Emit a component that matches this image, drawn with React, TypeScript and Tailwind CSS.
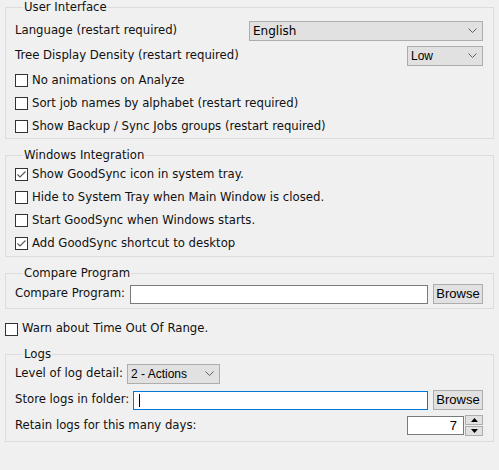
import React from "react";

const font = { fontFamily: '"DejaVu Sans", "Liberation Sans", sans-serif' };
const ctrlFont = { fontFamily: '"Liberation Sans", Arial, sans-serif' };

function Chevron() {
  return (
    <svg width="9" height="6" viewBox="0 0 9 6" className="shrink-0">
      <path d="M0.5 0.5 L4.5 4.5 L8.5 0.5" fill="none" stroke="#606060" strokeWidth="1" />
    </svg>
  );
}

function Select({ value, className, style }: { value: string; className: string; style?: React.CSSProperties }) {
  return (
    <div
      className={`flex items-center justify-between h-[20px] bg-[#e1e1e1] border border-[#adadad] pl-[3px] pr-[5px] text-[12px] text-black ${className}`}
      style={style}
    >
      <span>{value}</span>
      <Chevron />
    </div>
  );
}

function Check({ label, checked = false }: { label: string; checked?: boolean }) {
  return (
    <div className="flex items-center h-[23px] gap-[4px]">
      <div className="w-[13px] h-[13px] border border-[#333] bg-white flex items-center justify-center shrink-0">
        {checked && (
          <svg width="11" height="11" viewBox="0 0 11 11">
            <path d="M1.5 5.5 L4 8 L9.5 2.5" fill="none" stroke="#555" strokeWidth="1.1" />
          </svg>
        )}
      </div>
      <span>{label}</span>
    </div>
  );
}

function Group({ title, children, className = "" }: { title: string; children: React.ReactNode; className?: string }) {
  return (
    <fieldset className={`border border-[#dcdcdc] pl-[9px] pr-[10px] ${className}`}>
      <legend className="ml-[8px] px-[1px] leading-[14px] h-[14px]">{title}</legend>
      {children}
    </fieldset>
  );
}

function Browse() {
  return (
    <div
      className="w-[50px] h-[20px] bg-[#e1e1e1] border border-[#adadad] flex items-center justify-center text-[13px] text-black shrink-0"
      style={ctrlFont}
    >
      Browse
    </div>
  );
}

export default function App() {
  return (
    <div className="w-[499px] h-[470px] bg-[#f0f0f0] text-[11.7px] text-[#111] px-[5px] overflow-hidden" style={font}>
      <Group title="User Interface">
        <div className="pt-[7px]">
          <div className="flex items-center justify-between h-[20px]">
            <span>Language (restart required)</span>
            <Select value="English" className="w-[234px]" style={font} />
          </div>
          <div className="flex items-center justify-between h-[20px] mt-[5px] mb-[3px]">
            <span>Tree Display Density (restart required)</span>
            <Select value="Low" className="w-[76px]" style={ctrlFont} />
          </div>
          <Check label="No animations on Analyze" />
          <Check label="Sort job names by alphabet (restart required)" />
          <Check label="Show Backup / Sync Jobs groups (restart required)" />
        </div>
      </Group>

      <Group title="Windows Integration" className="mt-[9px]">
        <div className="pt-[1px] pb-[1px]">
          <Check label="Show GoodSync icon in system tray." checked />
          <Check label="Hide to System Tray when Main Window is closed." />
          <Check label="Start GoodSync when Windows starts." />
          <Check label="Add GoodSync shortcut to desktop" checked />
        </div>
      </Group>

      <Group title="Compare Program" className="mt-[9px]">
        <div className="flex items-center h-[20px] mt-[4px] mb-[4px]">
          <span className="w-[115px]">Compare Program:</span>
          <div className="w-[298px] h-[19px] bg-white border border-[#7a7a7a]" />
          <div className="ml-auto">
            <Browse />
          </div>
        </div>
      </Group>

      <div className="flex items-center h-[20px] mt-[10px] gap-[4px]">
        <div className="w-[13px] h-[13px] border border-[#333] bg-white shrink-0" />
        <span>Warn about Time Out Of Range.</span>
      </div>

      <Group title="Logs" className="mt-[8px]">
        <div className="pt-[3px] pb-[5px]">
          <div className="flex items-center h-[20px]">
            <span className="w-[112px]">Level of log detail:</span>
            <Select value="2 - Actions" className="w-[93px]" style={ctrlFont} />
          </div>
          <div className="flex items-center h-[20px] mt-[6px]">
            <span className="w-[118px]">Store logs in folder:</span>
            <div className="w-[295px] h-[19px] bg-white border border-[#0078d7] flex items-center pl-[5px]">
              <span className="w-[1px] h-[13px] bg-black" />
            </div>
            <div className="ml-auto">
              <Browse />
            </div>
          </div>
          <div className="flex items-center justify-between h-[21px] mt-[5px]">
            <span>Retain logs for this many days:</span>
            <div className="flex items-center gap-[1px]">
              <div
                className="w-[57px] h-[19px] bg-white border border-[#7a7a7a] flex items-center justify-end pr-[6px] text-[13px] text-black"
                style={ctrlFont}
              >
                7
              </div>
              <div className="flex flex-col gap-[1px]">
                <div className="w-[18px] h-[10px] bg-[#e1e1e1] border border-[#adadad] flex items-center justify-center">
                  <svg width="7" height="4" viewBox="0 0 7 4">
                    <path d="M3.5 0 L7 4 L0 4 Z" fill="#000" />
                  </svg>
                </div>
                <div className="w-[18px] h-[10px] bg-[#e1e1e1] border border-[#adadad] flex items-center justify-center">
                  <svg width="7" height="4" viewBox="0 0 7 4">
                    <path d="M0 0 L7 0 L3.5 4 Z" fill="#000" />
                  </svg>
                </div>
              </div>
            </div>
          </div>
        </div>
      </Group>
    </div>
  );
}
